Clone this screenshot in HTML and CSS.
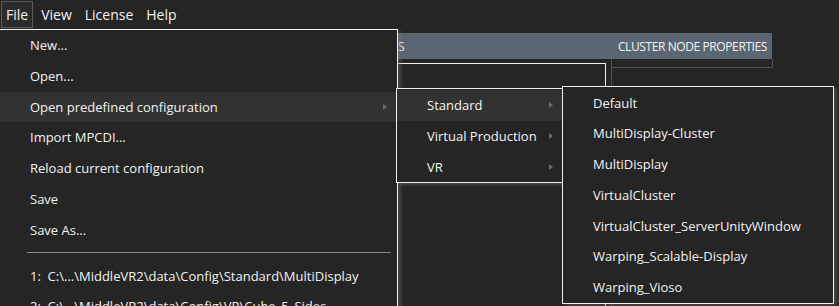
FILE: index.html
```html
<!DOCTYPE html>
<html lang="en">
<head>
    <meta charset="UTF-8">
    <title>MiddleVR Config</title>
    <link rel="stylesheet" href="styles.css">
</head>
<body>
    <div class="menubar">
        <div class="menubar-item active">File</div>
        <div class="menubar-item">View</div>
        <div class="menubar-item">License</div>
        <div class="menubar-item">Help</div>
    </div>

    <!-- workspace behind the open menus -->
    <div class="workspace">
        <div class="panel-header">
            <span class="header-left">CLUSTER NODES</span>
            <span class="header-right">CLUSTER NODE PROPERTIES</span>
        </div>
        <div class="panels">
            <div class="panel-left"></div>
            <div class="panel-right">
                <div class="panel-right-top"></div>
            </div>
        </div>
    </div>

    <!-- File menu -->
    <div class="menu file-menu">
        <div class="menu-item">New...</div>
        <div class="menu-item">Open...</div>
        <div class="menu-item hover has-sub">Open predefined configuration</div>
        <div class="menu-item">Import MPCDI...</div>
        <div class="menu-item">Reload current configuration</div>
        <div class="menu-item">Save</div>
        <div class="menu-item">Save As...</div>
        <div class="menu-sep"></div>
        <div class="menu-item">1:&nbsp; C:\...\MiddleVR2\data\Config\Standard\MultiDisplay</div>
        <div class="menu-item">2:&nbsp; C:\...\MiddleVR2\data\Config\VR\Cube_5_Sides</div>
    </div>

    <div class="menu sub-menu">
        <div class="menu-item hover has-sub">Standard</div>
        <div class="menu-item has-sub">Virtual Production</div>
        <div class="menu-item has-sub">VR</div>
    </div>

    <div class="menu config-menu">
        <div class="menu-item">Default</div>
        <div class="menu-item">MultiDisplay-Cluster</div>
        <div class="menu-item">MultiDisplay</div>
        <div class="menu-item">VirtualCluster</div>
        <div class="menu-item">VirtualCluster_ServerUnityWindow</div>
        <div class="menu-item">Warping_Scalable-Display</div>
        <div class="menu-item">Warping_Vioso</div>
    </div>
</body>
</html>
```

FILE: styles.css
```css
html {
    overflow: hidden;
}
body {
    font-family: 'Open Sans', 'Noto Sans', sans-serif;
    font-size: 13px;
    background-color: #252525;
    color: #f2f2f2;
    margin: 0;
    padding: 0;
    overflow: hidden;
    height: 306px;
    position: relative;
}
.menubar {
    display: flex;
    height: 29px;
    padding: 1px 0 0 1px;
    box-sizing: border-box;
}
.menubar-item {
    height: 27px;
    line-height: 26px;
    padding: 0 4px;
    margin-right: 3px;
    border: 1px solid transparent;
    box-sizing: border-box;
    font-size: 14px;
}
.menubar-item.active {
    border-color: #5a5a5a;
    background-color: #2b2b2b;
}
.workspace {
    padding-top: 4px;
}
.panel-header {
    width: 772px;
    height: 26px;
    background-color: #5a6673;
    display: flex;
    align-items: center;
    font-size: 12px;
    letter-spacing: -0.4px;
}
.header-left {
    margin-left: 316px;
}
.header-right {
    margin-left: auto;
    margin-right: 5px;
}
.panels {
    display: flex;
    gap: 5px;
}
.panel-left {
    width: 606px;
    height: 260px;
    margin-top: 4px;
    border: 1px solid #f0f0f0;
    box-sizing: border-box;
}
.panel-right {
    width: 161px;
    height: 260px;
    border-left: 1px solid #4b5159;
}
.panel-right-top {
    height: 8px;
    border: 1px solid #4b5159;
    border-left: none;
    border-top: none;
}

/* 메뉴 (absolute: 위에 떠 있는 팝업) */
.menu {
    position: absolute;
    background-color: #252525;
    border: 1px solid #f0f0f0;
    box-shadow: 3px 2px 3px rgba(110, 110, 110, 0.45);
}
.file-menu {
    left: -1px;
    top: 29px;
    width: 399px;
    height: 280px;
    overflow: hidden;
    box-sizing: border-box;
}
.sub-menu {
    left: 396px;
    top: 88px;
    width: 168px;
    padding-top: 1px;
    box-sizing: border-box;
}
.config-menu {
    left: 562px;
    top: 86px;
    width: 272px;
    padding-top: 0.5px;
    box-sizing: border-box;
}
.menu-item {
    height: 30.8px;
    line-height: 30.8px;
    padding-left: 30px;
    white-space: nowrap;
    position: relative;
}
.menu-item.hover {
    background-color: #323232;
}
.has-sub::after {
    content: "";
    position: absolute;
    right: 10px;
    top: 12px;
    border-left: 4px solid #6c6c6c;
    border-top: 3.5px solid transparent;
    border-bottom: 3.5px solid transparent;
}
.menu-sep {
    height: 1px;
    background-color: #8a8a8a;
    margin: 6px 6px 8px 27px;
}
```
